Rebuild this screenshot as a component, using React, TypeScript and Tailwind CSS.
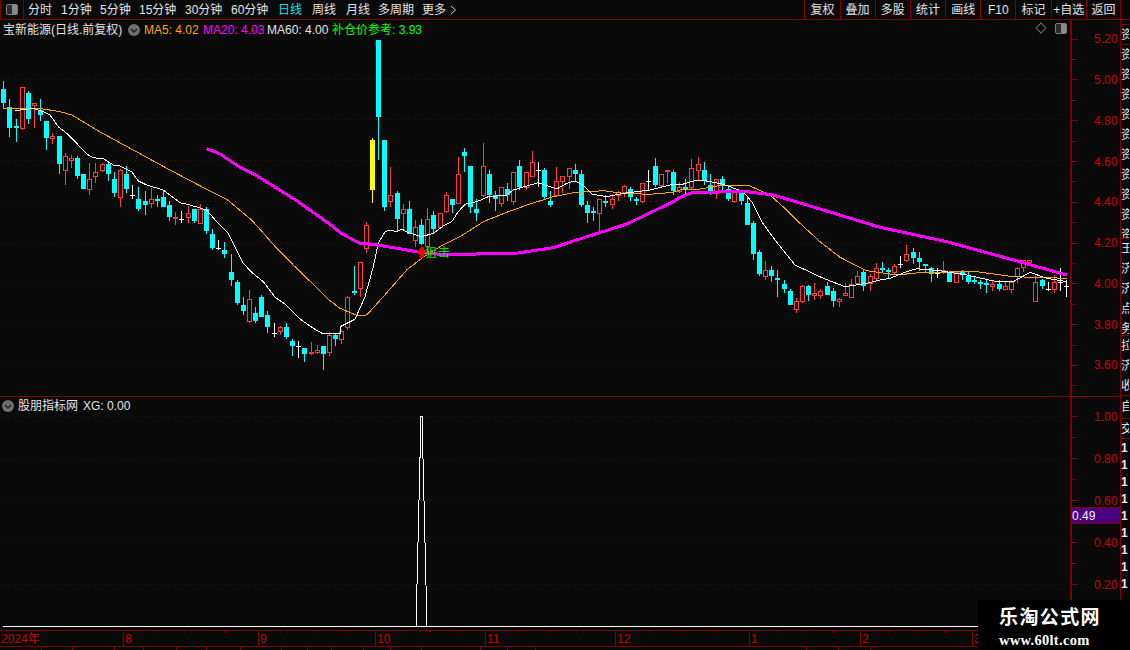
import React from "react";

type C = [string, number, number, number, number];

const z3: C[] = [
  ["c",3,27,69,85],["c",57,81,144,172],["c",117,138,144,186],["r",20,22,147,149],["c",33,39,117,132],["r",69,70,78,144],["c",57,90,105,123],
  ["c",123,123,174,210],["r",160,169,177,192],["c",168,168,252,282],["r",220,229,272,315],["r",225,235,242,264],["c",228,234,288,297],["c",282,282,327,327],
  ["r",250,298,329,345],["r",250,277,290,309],["r",250,253,272,276],["c",245,252,282,303],["c",276,297,339,351],["r",268,271,353,381],["c",258,282,327,339],
  ["w",315,345,348,357],["c",321,357,387,393],["c",333,363,375,405],["r",324,358,371,384],["c",345,357,363,381],["c",333,351,381,381],["c",363,375,411,423],
  ["r",396,412,418,435],["w",393,417,420,429],["r",378,400,413,429],["c",387,387,423,429],["r",372,388,431,432],["c",381,387,453,462],["c",447,462,504,510],
  ["w",480,505,508,510],["c",486,510,522,534],["c",522,576,600,618],["c",600,606,669,675],["c",651,675,693,705],["r",630,658,725,729],["c",681,699,723,729],
  ["c",645,651,711,711],["c",693,705,741,759],["w",729,759,762,771],["r",738,742,755,765],["c",729,741,771,777],["c",777,783,798,828],["w",783,798,801,834],
  ["c",804,804,822,846],["r",786,817,823,825],["r",795,811,818,822],["c",798,798,822,870],["r",756,766,818,828],["c",759,765,777,798],["r",750,754,779,792],
];
const z4: C[] = [
  ["r",648,651,745,750],["c",558,633,639,645],["r",547,547,628,650],["r",427,436,506,520],["y",175,180,330,368],["c",-120,-120,110,240],["c",180,180,380,392],
  ["r",262,346,365,380],["c",333,339,417,453],["r",372,388,401,444],["c",363,387,462,462],["r",420,442,483,500],["c",417,435,492,495],["r",384,417,500,520],
  ["c",393,405,447,462],["r",400,400,444,447],["r",336,346,395,398],["c",357,357,375,399],["r",231,283,371,372],["c",204,216,228,276],["c",258,258,381,399],
  ["c",357,387,399,423],["r",189,259,347,350],["c",270,282,345,369],["c",333,345,357,393],["r",321,322,371,381],["c",309,327,345,363],["r",276,277,365,375],
  ["c",240,258,321,330],["r",276,277,323,330],["r",213,247,290,290],["w",246,270,273,321],["c",264,270,351,360],["c",333,363,375,381],["r",261,304,347,348],
  ["r",288,289,305,339],["r",264,265,290,327],["c",252,270,282,303],["c",270,282,375,381],["c",363,375,399,429],["c",381,393,399,423],["r",358,358,401,462],
  ["c",345,363,369,381],["r",342,358,376,387],["r",333,336,349,363],["r",316,317,339,351],["c",321,327,351,363],["c",351,357,363,375],["r",309,310,366,369],
  ["w",270,303,306,333],["c",234,258,315,321],["r",282,283,317,324],["r",270,271,277,309],["c",270,276,333,345],["r",306,321,336,339],
];
const z5: C[] = [
  ["c",117,141,147,165],["r",57,85,143,148],["r",52,72,92,122],["c",66,90,123,135],["c",102,135,153,165],["r",117,118,156,177],["c",108,117,138,150],
  ["c",135,147,177,183],["r",150,156,186,190],["c",153,156,183,195],["c",168,189,255,255],["c",243,249,342,360],["c",330,336,402,408],["r",363,390,411,420],
  ["c",378,390,408,426],["c",390,414,420,471],["c",420,432,447,459],["c",447,453,495,495],["r",474,484,510,519],["r",435,438,485,488],["c",435,438,465,483],
  ["r",429,460,467,480],["r",447,454,467,477],["c",426,438,465,465],["c",444,453,483,501],["r",474,478,485,501],["r",429,460,467,468],["r",417,432,473,474],
  ["r",393,408,432,435],["c",390,396,438,453],["r",402,408,433,453],["r",369,385,417,420],["c",366,384,390,396],["c",384,390,396,417],["r",372,378,399,405],
  ["w",348,372,375,384],["r",315,343,362,366],["c",324,336,354,372],["c",336,354,366,393],["c",372,372,378,396],["c",381,384,402,426],["w",384,399,402,414],
  ["r",363,390,399,402],["c",396,396,426,426],["r",396,397,428,429],["c",390,396,402,420],["c",396,408,426,432],["c",411,420,426,432],["c",420,426,432,447],
  ["c",420,429,435,459],["r",423,432,440,453],["c",420,432,447,453],["r",423,438,449,450],["r",420,426,449,459],["r",381,384,411,429],["r",360,361,385,396],
  ["r",360,361,369,372],["r",405,427,485,486],["c",417,420,438,447],["w",426,447,450,453],["r",405,427,449,459],["w",384,426,429,453],["w",420,438,441,471],
];

const conv = (a: C[], oy: number) =>
  a.map(([t, a1, b, c, d]) => [t, oy + a1 / 3, oy + b / 3, oy + c / 3, oy + d / 3] as C);
const candles: C[] = [...conv(z3, 80), ...conv(z4, 80), ...conv(z5, 140)];

const pts = (a: number[][], ox: number, oy: number) => a.map(([x, y]) => [ox + x / 3, oy + y / 3]);
const toStr = (p: number[][]) => p.map(([x, y]) => `${x.toFixed(1)},${y.toFixed(1)}`).join(" ");

const white = [
  ...pts([[45,93],[60,90],[100,85],[130,95],[150,105],[175,140],[200,160],[230,190],[260,222],[280,233],[310,236],[340,255],[360,258],[395,275],[415,303],[440,315],[490,330],[540,368],[570,375],[620,390],[650,425],[685,460],[730,550],[755,577],[790,605],[825,652],[855,672],[900,717],[940,745],[970,762],[1020,760]],0,80),
  ...pts([[0,740],[45,718],[75,650],[100,560],[115,490],[135,455],[150,450],[170,455],[185,447],[205,458],[245,470],[280,460],[310,438],[335,425],[355,395],[375,373],[410,365],[445,350],[500,345],[520,330],[570,315],[595,308],[650,327],[680,310],[705,303],[730,315],[755,342],[800,350],[850,340],[930,330],[1000,313]],340,80),
  ...pts([[0,135],[45,122],[75,122],[130,133],[190,155],[215,185],[245,245],[285,300],[345,375],[430,415],[495,440],[560,430],[600,420],[630,415],[680,395],[710,386],[780,392],[860,405],[950,425],[1000,425],[1050,397],[1100,415],[1160,425]],680,140),
];
const orange = [
  ...pts([[10,86],[130,87],[180,95],[215,105],[290,150],[390,205],[510,270],[620,328],[680,358],[755,420],[830,505],[885,560],[990,662]],0,80),
  ...pts([[0,685],[50,706],[80,705],[130,650],[200,570],[245,535],[300,500],[360,470],[430,425],[500,397],[570,372],[640,350],[700,338],[790,332],[850,340],[930,343],[1000,337]],340,80),
  ...pts([[0,150],[60,147],[130,135],[210,138],[270,165],[320,210],[360,250],[420,305],[480,352],[560,392],[650,405],[730,397],[890,395],[1000,410],[1160,415]],680,140),
];
const magenta = [
  ...pts([[620,206],[660,222],[720,262],[770,287],[890,362],[1000,440]],0,80),
  ...pts([[0,458],[60,490],[100,493],[240,517],[300,523],[520,521],[640,503],[710,480],[860,432],[1000,365]],340,80),
  ...pts([[0,172],[40,157],[200,155],[280,165],[380,195],[600,262],[800,305],[1000,360],[1160,405]],680,140),
];

const RED = "#ff3c3c";
const CYAN = "#00ffff";

function Candle({ c, i }: { c: C; i: number }) {
  const [t, wt, bt, bb, wb] = c;
  const x = Math.round(3.3 + 6.144 * i);
  const T = Math.round(wt), B = Math.round(bt), E = Math.round(bb), W = Math.round(wb);
  if (t === "r") {
    return (
      <g>
        <rect x={x} y={T} width={1} height={Math.max(0, B - T)} fill={RED} />
        <rect x={x} y={E} width={1} height={Math.max(0, W - E)} fill={RED} />
        <rect x={x - 1.5} y={B + 0.5} width={4} height={Math.max(1, E - B - 1)} fill="none" stroke={RED} />
      </g>
    );
  }
  const col = t === "c" ? CYAN : t === "y" ? "#ffff00" : "#ffffff";
  return (
    <g fill={col}>
      <rect x={x} y={T} width={1} height={Math.max(1, W - T)} />
      <rect x={x - 2} y={B} width={5} height={Math.max(1, E - B)} />
    </g>
  );
}

const GRID = [79, 119, 160, 201, 242, 283, 323, 364];
const SUBGRID = [416, 458, 500, 542, 584];

function MainChart() {
  return (
    <svg width={1070} height={376} viewBox="0 20 1070 376" className="block" shapeRendering="crispEdges">
      {GRID.map((y) => (
        <line key={y} x1={0} x2={1070} y1={y + 0.5} y2={y + 0.5} stroke="#5c0a0a" strokeDasharray="1 4" />
      ))}
      {candles.map((c, i) => (
        <Candle key={i} c={c} i={i} />
      ))}
      <polyline points={toStr(orange)} fill="none" stroke="#ffa500" strokeWidth={1} />
      <polyline points={toStr(white)} fill="none" stroke="#ffffff" strokeWidth={1} />
      <polyline points={toStr(magenta)} fill="none" stroke="#ff00ff" strokeWidth={3} />
      <path d="M422 246 L417 253 L420 253 L420 258 L424 258 L424 253 L427 253 Z" fill="#ff0000" />
    </svg>
  );
}

function SubChart() {
  return (
    <svg width={1070} height={233} viewBox="0 397 1070 233" className="block" shapeRendering="crispEdges">
      {SUBGRID.map((y) => (
        <line key={y} x1={0} x2={1070} y1={y + 0.5} y2={y + 0.5} stroke="#5c0a0a" strokeDasharray="1 4" />
      ))}
      <polyline points="3,626.5 416,626.5 421,416 422,416 427,626.5 1070,626.5" fill="none" stroke="#ffffff" strokeWidth={1} />
      <line x1={3} x2={1070} y1={626.5} y2={626.5} stroke="#ffffff" />
    </svg>
  );
}

function Axis({ labels, h, pt }: { labels: string[]; h: string; pt: string }) {
  return (
    <div className={`${pt} flex flex-col`}>
      {labels.map((l) => (
        <React.Fragment key={l}>
          <div className={`${h} flex items-center`}>
            <div className="w-[6px] h-px bg-[#800000]" />
            <span className="ml-[16px] text-[12px] leading-none text-[#c80000]">{l}</span>
          </div>
          <div className={`${h} flex items-center`}>
            <div className="w-[3px] h-px bg-[#800000]" />
          </div>
        </React.Fragment>
      ))}
    </div>
  );
}

function Chev() {
  return (
    <svg width={12} height={12} viewBox="0 0 12 12" className="shrink-0">
      <circle cx={6} cy={6} r={6} fill="#6e6e6e" />
      <path d="M3 5 L6 8 L9 5" fill="none" stroke="#1c1c1c" strokeWidth={1.3} />
    </svg>
  );
}

const LEFT = [
  ["分时", 33, false], ["1分钟", 39, false], ["5分钟", 39, false], ["15分钟", 46, false], ["30分钟", 46, false],
  ["60分钟", 47, false], ["日线", 34, true], ["周线", 34, false], ["月线", 32, false], ["多周期", 44, false], ["更多", 28, false],
] as const;

const RIGHT = ["复权", "叠加", "多股", "统计", "画线", "F10", "标记", "+自选", "返回"];

const SIDE_A = ["资", "资", "资", "资", "资", "资", "资", "资", "资", "资"];
const ONES = ["1", "1", "1", "1", "1", "1", "1", "1", "1"];

const DATES: [string, number, number][] = [
  ["2024年", 123, 0], ["8", 135, 4], ["9", 117, 4], ["10", 110, 4], ["11", 130, 4], ["12", 134, 4], ["1", 111, 4], ["2", 112, 4], ["3", 100, 3],
];

const STRIP = [42, 31, 42, 29, 33, 30, 34, 41, 26, 24, 32, 27, 31, 59, 27, 28, 271, 32, 32];

function SideCell({ t, cls = "" }: { t: string; cls?: string }) {
  return (
    <div className={`h-[20px] w-[8px] shrink-0 overflow-hidden flex items-center text-[12px] leading-none text-[#e8e8e8] ${cls}`}>
      <span className="shrink-0 w-[12px]">{t}</span>
    </div>
  );
}

export default function App() {
  return (
    <div
      className="relative w-[1130px] h-[650px] overflow-hidden bg-[#0a0a0a] text-[12px] text-[#e4e4e4] flex flex-col"
      style={{ fontFamily: '"Liberation Sans", "Noto Sans CJK SC", sans-serif' }}
    >
      {/* toolbar */}
      <div className="h-[20px] shrink-0 flex items-stretch border-b border-[#800000]">
        <div className="w-[24px] flex items-center justify-center border-r border-l border-[#800000]">
          <div className="w-[12px] h-[11px] border border-[#7c7c7c] rounded-[2px] bg-[#2a2a2a] flex justify-end">
            <div className="w-[5px] bg-[#8a8a8a]" />
          </div>
        </div>
        <div className="flex items-center pl-[4px]">
          {LEFT.map(([t, w, on]) => (
            <div key={t} style={{ width: w }} className={`shrink-0 whitespace-nowrap ${on ? "text-[#00e6e6]" : ""}`}>
              {t}
            </div>
          ))}
          <svg width={7} height={10} viewBox="0 0 7 10" className="shrink-0">
            <path d="M1 1 L5.5 5 L1 9" fill="none" stroke="#d8d8d8" />
          </svg>
        </div>
        <div className="ml-auto flex items-stretch pr-[9px]">
          {RIGHT.map((t) => (
            <div key={t} className="w-[35.2px] flex items-center justify-center border-l border-[#800000] whitespace-nowrap last:border-r">
              {t}
            </div>
          ))}
        </div>
      </div>

      {/* body */}
      <div className="flex h-[610px] shrink-0">
        <div className="w-[1121px] shrink-0 flex flex-col border-r border-[#800000]">
          {/* main pane */}
          <div className="relative h-[377px] shrink-0 flex border-b border-[#800000]">
            <MainChart />
            <div className="w-[2px] shrink-0 bg-[#800000] h-[376px]" />
            <Axis labels={["5.20", "5.00", "4.80", "4.60", "4.40", "4.20", "4.00", "3.80", "3.60"]} h="h-[20.4px]" pt="pt-[9px]" />

            <div className="absolute left-[3px] top-[1px] flex items-center h-[17px] whitespace-nowrap">
              <span className="w-[125px]">宝新能源(日线.前复权)</span>
              <Chev />
              <span className="ml-[4px] w-[59px] text-[#ffa500]">MA5: 4.02</span>
              <span className="w-[64px] text-[#ff00ff]">MA20: 4.03</span>
              <span className="w-[65px]">MA60: 4.00</span>
              <span className="text-[#00ff00]">补仓价参考: 3.93</span>
            </div>

            <div className="absolute left-[1037px] top-[4px] w-[8px] h-[8px] rotate-45 border border-[#6e6e6e]" />
            <div className="absolute left-[1055px] top-[3px] w-[12px] h-[11px] border border-[#7c7c7c] rounded-[2px] bg-[#2a2a2a] flex justify-end">
              <div className="w-[5px] bg-[#8a8a8a]" />
            </div>

            <div className="absolute left-[425px] top-[227px] text-[12px] leading-none tracking-[1px] text-[#00e800]">狙击</div>
          </div>

          {/* indicator pane */}
          <div className="relative h-[233px] shrink-0 flex">
            <SubChart />
            <div className="w-[2px] shrink-0 bg-[#800000] h-[233px]" />
            <Axis labels={["1.00", "0.80", "0.60", "0.40", "0.20"]} h="h-[21px]" pt="pt-[9px]" />

            <div className="absolute left-[2px] top-[2px] flex items-center h-[14px] whitespace-nowrap">
              <Chev />
              <span className="ml-[4px]">股朋指标网</span>
              <span className="ml-[5px]">XG: 0.00</span>
            </div>

            <div className="absolute left-[1071px] top-[110px] w-[49px] h-[17px] bg-[#4b0082] border-y border-[#800000] pl-[1px] flex items-center text-[#f0f0f0]">
              0.49
            </div>
          </div>
        </div>

        {/* right cut-off list */}
        <div className="w-[8px] shrink-0 flex flex-col">
          <div className="h-[5px] shrink-0 border-b border-[#800000]" />
          <SideCell t="资" cls="border-b border-[#800000]" />
          <div className="h-[194px] shrink-0 overflow-hidden border-b border-[#800000] flex flex-col">
            {SIDE_A.map((t, i) => (
              <SideCell key={i} t={t} cls="h-[19.3px]" />
            ))}
          </div>
          <div className="h-[97px] shrink-0 border-b border-[#800000] flex flex-col">
            {["王", "济", "济", "点", "务"].map((t, i) => (
              <SideCell key={i} t={t} cls="h-[19px]" />
            ))}
          </div>
          <div className="h-[60px] shrink-0 border-b border-[#800000] flex flex-col">
            {["拉", "济", "收"].map((t, i) => (
              <SideCell key={i} t={t} />
            ))}
          </div>
          <SideCell t="自" cls="h-[23px] text-[#e0e000] border-b border-[#800000]" />
          <SideCell t="交" cls="border-b border-[#800000]" />
          {ONES.map((t, i) => (
            <div key={i} className="h-[17px] shrink-0 text-[12px] font-bold text-[#e8e8e8] flex items-center">
              {t}
            </div>
          ))}
        </div>
      </div>

      {/* date axis */}
      <div className="h-[17px] shrink-0 w-[1121px] border-y border-[#800000] flex text-[#c80000] text-[12px] leading-none">
        {DATES.map(([t, w, n], i) => (
          <div key={i} style={{ width: w }} className={`relative shrink-0 flex items-center pl-[1px] ${i ? "border-l border-[#800000]" : ""}`}>
            {t}
            <div className="absolute inset-x-0 top-0 h-[2px] flex">
              {Array.from({ length: n }).map((_, k) => (
                <div key={k} className={`flex-1 ${k < n - 1 ? "border-r border-[#800000]" : ""}`} />
              ))}
            </div>
          </div>
        ))}
      </div>

      {/* status strip */}
      <div className="h-[3px] flex">
        {STRIP.map((w, i) => (
          <div key={i} style={{ width: w }} className="shrink-0 border-r border-[#800000]" />
        ))}
      </div>

      {/* watermark */}
      <div className="absolute right-0 bottom-0 w-[152px] h-[50px] bg-black flex flex-col items-start pl-[21px] pt-[7px] text-white" style={{ fontFamily: '"Liberation Serif", "Noto Sans CJK SC", serif' }}>
        <div className="text-[19px] leading-[22px] font-bold tracking-[1.4px] whitespace-nowrap">乐淘公式网</div>
        <div className="text-[14.5px] leading-[16px] font-bold tracking-[0.3px] mt-[3px] whitespace-nowrap">www.60lt.com</div>
      </div>
    </div>
  );
}
